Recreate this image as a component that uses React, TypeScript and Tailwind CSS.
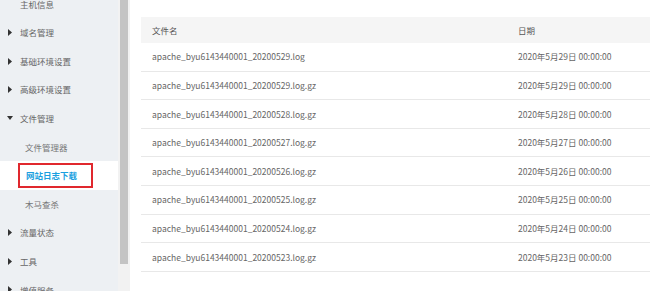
import React from "react";

const font = { fontFamily: '"Noto Sans CJK SC", "Noto Sans", sans-serif' };

type Item = { label: string; kind: "top" | "open" | "sub" | "active" | "plain" };

const items: Item[] = [
  { label: "主机信息", kind: "plain" },
  { label: "域名管理", kind: "top" },
  { label: "基础环境设置", kind: "top" },
  { label: "高级环境设置", kind: "top" },
  { label: "文件管理", kind: "open" },
  { label: "文件管理器", kind: "sub" },
  { label: "网站日志下载", kind: "active" },
  { label: "木马查杀", kind: "sub" },
  { label: "流量状态", kind: "top" },
  { label: "工具", kind: "top" },
  { label: "增值服务", kind: "top" },
];

const rows = [
  ["apache_byu6143440001_20200529.log", "2020年5月29日 00:00:00"],
  ["apache_byu6143440001_20200529.log.gz", "2020年5月29日 00:00:00"],
  ["apache_byu6143440001_20200528.log.gz", "2020年5月28日 00:00:00"],
  ["apache_byu6143440001_20200527.log.gz", "2020年5月27日 00:00:00"],
  ["apache_byu6143440001_20200526.log.gz", "2020年5月26日 00:00:00"],
  ["apache_byu6143440001_20200525.log.gz", "2020年5月25日 00:00:00"],
  ["apache_byu6143440001_20200524.log.gz", "2020年5月24日 00:00:00"],
  ["apache_byu6143440001_20200523.log.gz", "2020年5月23日 00:00:00"],
];

function SideItem({ item }: { item: Item }) {
  if (item.kind === "active") {
    return (
      <div className="h-[28.6px] bg-white flex items-center pl-[18px]">
        <div className="h-[25px] w-[75px] border-2 border-[#e0282e] flex items-center pl-[6px] text-[#1a9fe0] font-bold">
          {item.label}
        </div>
      </div>
    );
  }
  if (item.kind === "sub") {
    return <div className="h-[28.6px] flex items-center pl-[25px] text-[#777]">{item.label}</div>;
  }
  return (
    <div className="h-[28.6px] flex items-center text-[#666]">
      <div className="w-[20px] flex items-center justify-center pl-[1px] pr-[2px]">
        {item.kind === "top" && (
          <svg width="4" height="7" viewBox="0 0 4 7">
            <path d="M0 0 L4 3.5 L0 7 Z" fill="#333" />
          </svg>
        )}
        {item.kind === "open" && (
          <svg width="6" height="4" viewBox="0 0 6 4">
            <path d="M0 0 L6 0 L3 4 Z" fill="#333" />
          </svg>
        )}
      </div>
      <span>{item.label}</span>
    </div>
  );
}

export default function App() {
  return (
    <div className="w-[650px] h-[291px] overflow-hidden flex bg-white" style={font}>
      <div className="w-[118px] h-full bg-[#edf0f3] text-[8.5px] overflow-hidden shrink-0">
        <div className="-mt-[10.3px]">
          {items.map((it) => (
            <SideItem key={it.label} item={it} />
          ))}
        </div>
      </div>
      <div className="w-[12px] h-full bg-[#f2f2f2] shrink-0 px-[2px]">
        <div className="h-[264px] bg-[#c4c4c4]" />
      </div>
      <div className="flex-1 overflow-hidden pl-[11px] pt-[17px]">
        <div className="w-[540px] text-[8.5px] text-[#666]">
          <div className="h-[26px] bg-[#f5f5f5] grid grid-cols-[366px_1fr] items-center pl-[11px] text-[#555]">
            <div>文件名</div>
            <div>日期</div>
          </div>
          {rows.map(([n, d]) => (
            <div
              key={n}
              className="h-[28.6px] border-b border-[#e8e8e8] grid grid-cols-[366px_1fr] items-center pl-[11px]"
            >
              <div>{n}</div>
              <div>{d}</div>
            </div>
          ))}
        </div>
      </div>
    </div>
  );
}
